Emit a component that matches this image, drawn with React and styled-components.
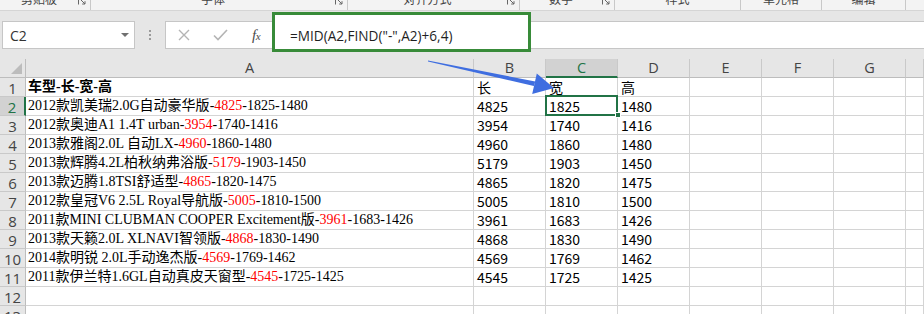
import React from "react";
import styled, { createGlobalStyle } from "styled-components";

const GlobalStyle = createGlobalStyle`
  html, body { margin: 0; padding: 0; background: #ffffff; }
  body { overflow: hidden; font-family: "Noto Sans", sans-serif; }
`;

const GREEN = "#217346";

const Page = styled.div`
  position: relative;
  width: 924px;
  height: 314px;
  overflow: hidden;
  background: #fff;
`;

/* ---------- ribbon group labels (cut off) ---------- */
const RibbonBar = styled.div`
  height: 10px;
  background: #f3f3f3;
  border-bottom: 1px solid #d5d5d5;
  display: grid;
  grid-template-columns: 91px 257px 172px 95px 126px 81px 84px 1fr;
  overflow: hidden;
`;

const Group = styled.div`
  display: grid;
  grid-template-columns: 1fr auto;
  align-items: start;
  border-right: ${(p) => (p.$last ? "none" : "1px solid #c8c8c8")};
  padding-right: ${(p) => (p.$launcher ? "4px" : "0")};
`;

const GroupLabel = styled.span`
  text-align: center;
  font-family: "Noto Sans CJK SC", sans-serif;
  font-size: 12px;
  line-height: 12px;
  margin-top: -7px;
  color: #444;
  white-space: nowrap;
`;

const LauncherIcon = styled.svg`
  display: block;
  width: 8px;
  height: 8px;
  margin-top: -3px;
`;

const Launcher = () => (
  <LauncherIcon viewBox="0 0 8 8">
    <path d="M0.5 0.5H7.5M0.5 0.5V7.5M2.5 2.5L7 7M7 4.2V7H4.2" fill="none" stroke="#666" strokeWidth="1" />
  </LauncherIcon>
);

/* ---------- formula bar ---------- */
const FormulaArea = styled.div`
  position: relative;
  height: 48px;
  box-sizing: border-box;
  padding-top: 10px;
  background: #e6e6e6;
  display: flex;
  align-items: flex-start;
`;

const NameBox = styled.div`
  margin-left: 2px;
  width: 133px;
  height: 28px;
  box-sizing: border-box;
  background: #fff;
  border: 1px solid #c6c6c6;
  display: flex;
  align-items: center;
  justify-content: space-between;
  padding: 0 5px 0 7px;
  font-family: "Open Sans", sans-serif;
  font-size: 14px;
  color: #333;
`;

const DropArrow = styled.span`
  width: 0;
  height: 0;
  border-left: 4px solid transparent;
  border-right: 4px solid transparent;
  border-top: 4px solid #707070;
`;

const Splitter = styled.div`
  width: 30px;
  height: 28px;
  display: flex;
  flex-direction: column;
  align-items: center;
  justify-content: center;
  gap: 2px;
`;

const Dot = styled.span`
  width: 2px;
  height: 2px;
  background: #9a9a9a;
`;

const FormulaInput = styled.div`
  flex: 1;
  height: 28px;
  box-sizing: border-box;
  background: #fff;
  border: 1px solid #c6c6c6;
  border-right: none;
  display: flex;
  align-items: center;
`;

const ToolButton = styled.span`
  width: 36px;
  height: 26px;
  display: flex;
  align-items: center;
  justify-content: center;
  color: #555;
`;

const FxLabel = styled.span`
  font-family: "Liberation Serif", serif;
  font-style: italic;
  font-size: 15px;
  color: #4a4a4a;
  letter-spacing: -0.5px;
  & small { font-size: 11px; }
`;

const FormulaText = styled.span`
  position: relative;
  z-index: 2;
  padding-left: 16px;
  font-family: "Open Sans", sans-serif;
  font-size: 13.6px;
  color: #1f1f1f;
  white-space: nowrap;
`;

const Highlight = styled.div`
  position: absolute;
  left: 272px;
  top: 1px;
  width: 259px;
  height: 40px;
  box-sizing: border-box;
  border: 3px solid #388b39;
  background: #fff;
  z-index: 1;
`;

/* ---------- sheet ---------- */
const Sheet = styled.div`
  display: grid;
  grid-template-columns: 26px 448px repeat(6, 72px) 1fr;
  grid-auto-rows: 19px;
`;

const Corner = styled.div`
  box-sizing: border-box;
  background: #e6e6e6;
  border-right: 1px solid #bdbdbd;
  border-bottom: 1px solid #bdbdbd;
  display: flex;
  align-items: flex-end;
  justify-content: flex-end;
  padding: 0 3px 3px 0;
`;

const CornerTriangle = styled.span`
  width: 0;
  height: 0;
  border-left: 11px solid transparent;
  border-bottom: 11px solid #bcbcbc;
`;

const ColHeader = styled.div`
  box-sizing: border-box;
  background: ${(p) => (p.$active ? "#d2d2d2" : "#e6e6e6")};
  border-right: 1px solid #c9c9c9;
  border-bottom: ${(p) => (p.$active ? `2px solid ${GREEN}` : "1px solid #bdbdbd")};
  text-align: center;
  font-family: "Open Sans", sans-serif;
  font-size: 14.5px;
  line-height: 18px;
  color: ${(p) => (p.$active ? GREEN : "#444")};
`;

const RowHeader = styled.div`
  box-sizing: border-box;
  background: ${(p) => (p.$active ? "#d2d2d2" : "#e6e6e6")};
  border-right: ${(p) => (p.$active ? `2px solid ${GREEN}` : "1px solid #bdbdbd")};
  border-bottom: 1px solid #c9c9c9;
  text-align: center;
  padding-top: 1px;
  font-family: "Open Sans", sans-serif;
  font-size: 15px;
  line-height: 18px;
  color: ${(p) => (p.$active ? GREEN : "#444")};
`;

const Cell = styled.div`
  position: relative;
  box-sizing: border-box;
  border-right: 1px solid #d4d4d4;
  border-bottom: 1px solid #d4d4d4;
  padding-left: ${(p) => (p.$serif ? "2px" : "3px")};
  font-family: ${(p) =>
    p.$serif ? '"Liberation Serif", "Noto Sans CJK SC", serif' : '"Noto Sans CJK SC", sans-serif'};
  font-size: 14px;
  font-weight: ${(p) => (p.$bold ? 700 : 400)};
  line-height: 18px;
  color: #000;
  white-space: nowrap;
  z-index: ${(p) => (p.$active ? 2 : "auto")};
  ${(p) =>
    p.$active &&
    `
    &::after {
      content: "";
      position: absolute;
      left: -1px; top: -2px; right: -1px; bottom: -1px;
      border: 2px solid ${GREEN};
    }
    &::before {
      content: "";
      position: absolute;
      right: -4px; bottom: -3px;
      width: 6px; height: 6px;
      box-sizing: border-box;
      background: ${GREEN};
      border: 1px solid #fff;
      z-index: 1;
    }
  `}
`;

const Red = styled.span`
  color: #ff0000;
`;

const ArrowLayer = styled.svg`
  position: absolute;
  left: 0;
  top: 0;
  width: 924px;
  height: 314px;
  pointer-events: none;
  z-index: 5;
`;

const groups = [
  { label: "剪贴板", launcher: true },
  { label: "字体", launcher: true },
  { label: "对齐方式", launcher: true },
  { label: "数字", launcher: true },
  { label: "样式" },
  { label: "单元格" },
  { label: "编辑" },
  { label: "", last: true },
];

const cols = ["A", "B", "C", "D", "E", "F", "G", ""];

const rows = [
  ["2012款凯美瑞2.0G自动豪华版", "4825", "1825", "1480"],
  ["2012款奥迪A1 1.4T urban", "3954", "1740", "1416"],
  ["2013款雅阁2.0L 自动LX", "4960", "1860", "1480"],
  ["2013款辉腾4.2L柏秋纳弗浴版", "5179", "1903", "1450"],
  ["2013款迈腾1.8TSI舒适型", "4865", "1820", "1475"],
  ["2012款皇冠V6 2.5L Royal导航版", "5005", "1810", "1500"],
  ["2011款MINI CLUBMAN COOPER Excitement版", "3961", "1683", "1426"],
  ["2013款天籁2.0L XLNAVI智领版", "4868", "1830", "1490"],
  ["2014款明锐 2.0L手动逸杰版", "4569", "1769", "1462"],
  ["2011款伊兰特1.6GL自动真皮天窗型", "4545", "1725", "1425"],
];

const EmptyCells = ({ count }) =>
  Array.from({ length: count }, (_, i) => <Cell key={"e" + i} />);

export default function App() {
  return (
    <Page>
      <GlobalStyle />
      <RibbonBar>
        {groups.map((g, i) => (
          <Group key={i} $launcher={g.launcher} $last={g.last}>
            <GroupLabel>{g.label}</GroupLabel>
            {g.launcher ? <Launcher /> : <span />}
          </Group>
        ))}
      </RibbonBar>

      <FormulaArea>
        <NameBox>
          <span>C2</span>
          <DropArrow />
        </NameBox>
        <Splitter>
          <Dot />
          <Dot />
          <Dot />
        </Splitter>
        <FormulaInput>
          <ToolButton>
            <svg width="12" height="12" viewBox="0 0 12 12">
              <path d="M1 1L11 11M11 1L1 11" stroke="#b4b4b4" strokeWidth="1.4" fill="none" />
            </svg>
          </ToolButton>
          <ToolButton>
            <svg width="15" height="12" viewBox="0 0 15 12">
              <path d="M1 6.5L5 10.5L14 1" stroke="#b4b4b4" strokeWidth="1.6" fill="none" />
            </svg>
          </ToolButton>
          <ToolButton>
            <FxLabel>
              f<small>x</small>
            </FxLabel>
          </ToolButton>
          <FormulaText>=MID(A2,FIND("-",A2)+6,4)</FormulaText>
        </FormulaInput>
        <Highlight />
      </FormulaArea>

      <Sheet>
        <Corner>
          <CornerTriangle />
        </Corner>
        {cols.map((c) => (
          <ColHeader key={"h" + c} $active={c === "C"}>
            {c}
          </ColHeader>
        ))}

        <RowHeader>1</RowHeader>
        <Cell $serif $bold>车型-长-宽-高</Cell>
        <Cell>长</Cell>
        <Cell>宽</Cell>
        <Cell>高</Cell>
        <EmptyCells count={4} />

        {rows.map(([name, l, w, h], i) => (
          <React.Fragment key={i}>
            <RowHeader $active={i === 0}>{i + 2}</RowHeader>
            <Cell $serif>
              {name}-<Red>{l}</Red>-{w}-{h}
            </Cell>
            <Cell>{l}</Cell>
            <Cell $active={i === 0}>{w}</Cell>
            <Cell>{h}</Cell>
            <EmptyCells count={4} />
          </React.Fragment>
        ))}

        {[12, 13].map((n) => (
          <React.Fragment key={n}>
            <RowHeader>{n}</RowHeader>
            <EmptyCells count={8} />
          </React.Fragment>
        ))}
      </Sheet>

      <ArrowLayer viewBox="0 0 924 314">
        <polygon points="428,60.5 535.3,81.6 533.9,86 428,61.5" fill="#3f6ee0" />
        <polygon points="554,88 536.8,73.6 532.2,94" fill="#3f6ee0" />
      </ArrowLayer>
    </Page>
  );
}
